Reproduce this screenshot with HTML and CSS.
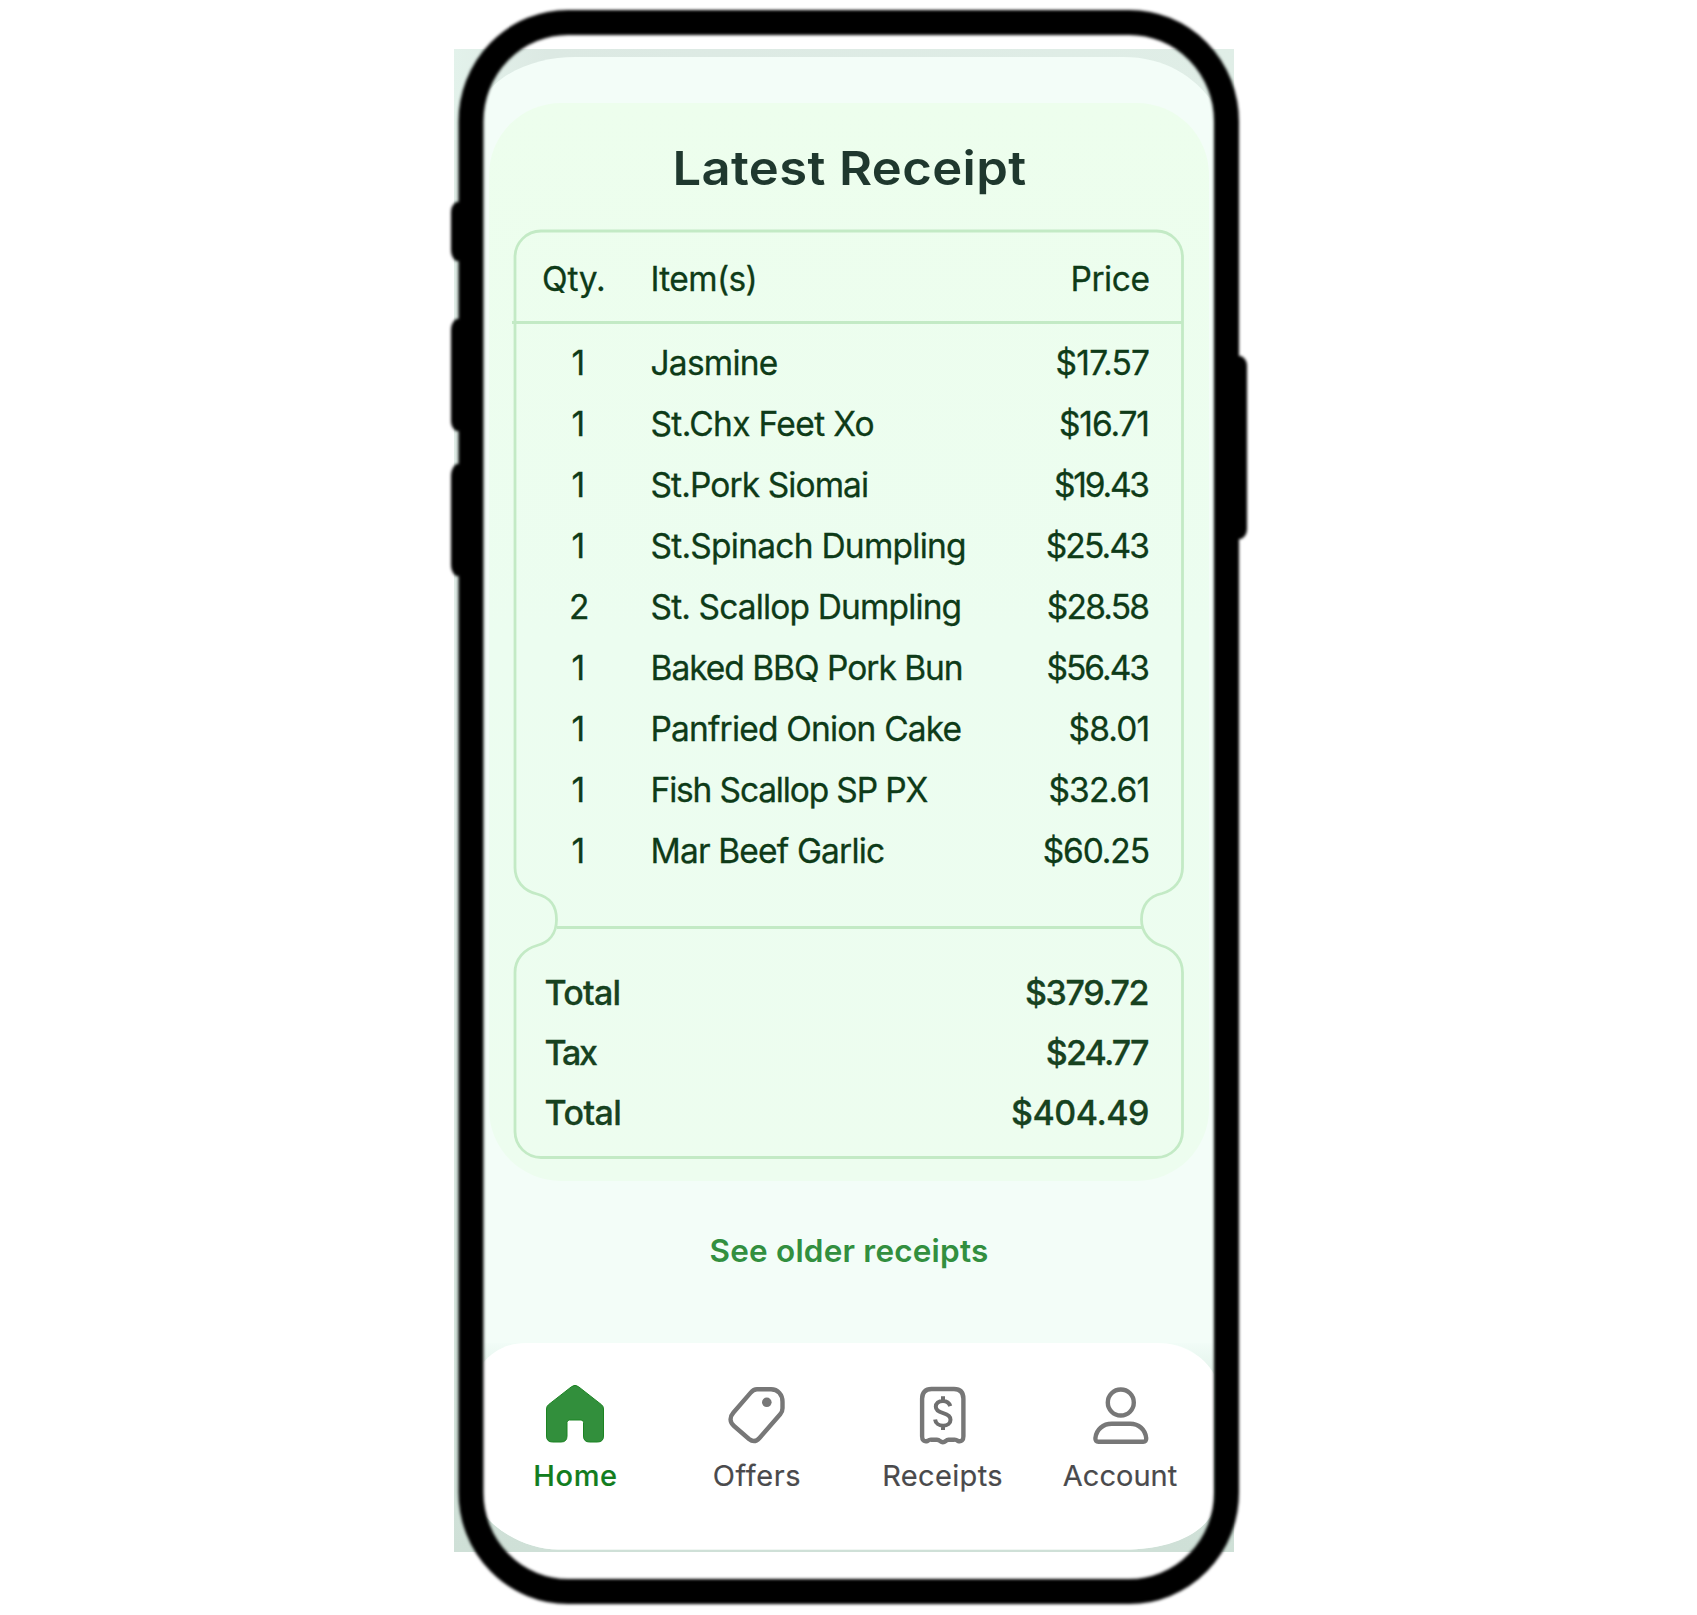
FILE: index.html
```html
<!DOCTYPE html>
<html lang="en">
<head>
<meta charset="utf-8">
<title>Latest Receipt</title>
<link rel="stylesheet" href="styles.css">
</head>
<body>
<div class="phone">
  <svg class="backdrop" viewBox="450 0 798 1615" aria-hidden="true">
    <defs>
      <linearGradient id="shade" x1="0" y1="0" x2="0" y2="1">
        <stop offset="0" stop-color="#dfede6"/><stop offset=".5" stop-color="#e2eee9"/><stop offset="1" stop-color="#cfe0d7"/>
      </linearGradient>
      <linearGradient id="strip" x1="0" y1="0" x2="1" y2="0">
        <stop offset="0" stop-color="#e3f2eb"/><stop offset=".12" stop-color="#dce9e3"/><stop offset="1" stop-color="#e0eee7"/>
      </linearGradient>
      <linearGradient id="corner" x1="0" y1="0" x2="0" y2="1">
        <stop offset="0" stop-color="#f1fcf7"/><stop offset="1" stop-color="#e2f2ea"/>
      </linearGradient>
    </defs>
    <path fill="url(#shade)" d="M454 49H1234V1552H454Z"/>
    <path fill="url(#strip)" d="M454 49H1234V140H454Z"/>
    <path fill="#f3fdf8" d="M482 100C500 70 540 57 575 57H1123C1165 57 1194 76 1214 104V1510C1202 1538 1160 1549.500 1125 1549.500H558C530 1549.500 500 1535 482 1512Z"/>
    <path fill="url(#corner)" d="M484 1343H1214V1376C1202 1354 1184 1343 1160 1343H524C508 1343 496 1351 484 1363Z"/>
    <path fill="#fff" d="M482 1364C494 1350 508 1343 526 1343H1158C1182 1343 1204 1356 1214 1374V1510C1200 1540 1160 1549.500 1125 1549.500H558C530 1549.500 500 1535 482 1512Z"/>
  </svg>

  <main class="panel">
    <h1 class="title">Latest Receipt</h1>
    <section class="ticket">
      <svg class="outline" viewBox="511 228.500 674 932" aria-hidden="true">
        <path d="M541 231.500H1156.500A26 26 0 0 1 1182.500 257.500V868C1182.500 881 1174 890.500 1162 894C1149 896.500 1141.500 906 1141.500 920C1141.500 933 1150 942.500 1161 946C1174 949.500 1182.500 960 1182.500 973V1132A26 26 0 0 1 1156.500 1158H541A26 26 0 0 1 515 1132V973C515 960 524 949.500 537 946C549 943 556.500 934 556.500 920C556.500 906 549 897.500 537 894.500C523 891 515 881 515 868V257.500A26 26 0 0 1 541 231.500Z"/>
        <path d="M512 323H1182M557 928H1142"/>
      </svg>
      <div class="row head"><span class="qty">Qty.</span><span class="item">Item(s)</span><span class="price">Price</span></div>
      <div class="rows">
        <div class="row r1"><span class="qty">1</span><span class="item">Jasmine</span><span class="price">$17.57</span></div>
        <div class="row r2"><span class="qty">1</span><span class="item">St.Chx Feet Xo</span><span class="price">$16.71</span></div>
        <div class="row r3"><span class="qty">1</span><span class="item">St.Pork Siomai</span><span class="price">$19.43</span></div>
        <div class="row r4"><span class="qty">1</span><span class="item">St.Spinach Dumpling</span><span class="price">$25.43</span></div>
        <div class="row r5"><span class="qty">2</span><span class="item">St. Scallop Dumpling</span><span class="price">$28.58</span></div>
        <div class="row r6"><span class="qty">1</span><span class="item">Baked BBQ Pork Bun</span><span class="price">$56.43</span></div>
        <div class="row r7"><span class="qty">1</span><span class="item">Panfried Onion Cake</span><span class="price">$8.01</span></div>
        <div class="row r8"><span class="qty">1</span><span class="item">Fish Scallop SP PX</span><span class="price">$32.61</span></div>
        <div class="row r9"><span class="qty">1</span><span class="item">Mar Beef Garlic</span><span class="price">$60.25</span></div>
      </div>
      <div class="totals">
        <div class="sum s1"><span class="label">Total</span><span class="price">$379.72</span></div>
        <div class="sum s2"><span class="label">Tax</span><span class="price">$24.77</span></div>
        <div class="sum s3"><span class="label">Total</span><span class="price">$404.49</span></div>
      </div>
    </section>
  </main>

  <a class="older">See older receipts</a>

  <nav class="tabs">
    <a class="tab home">
      <svg viewBox="1 0 60 60" aria-hidden="true"><path fill="#328f3c" stroke="#1b8322" d="M26.500 1.700Q30 -1 33.500 1.700L56.500 19.700Q58.500 21.300 58.500 24V51Q58.500 57 52.500 57H44.500Q38.500 57 38.500 51V37.500Q38.500 35 36 35H24.500Q22 35 22 37.500V51Q22 57 16 57H7.500Q1.500 57 1.500 51V24Q1.500 21.300 3.500 19.700Z"/></svg>
      <span>Home</span>
    </a>
    <a class="tab offers">
      <svg viewBox="0 0 60 60" aria-hidden="true"><path class="line" d="M30 4.300H44C51 4.300 55.500 9.700 55.500 16.700V23.200Q55.500 26.700 53.200 29.300L32.500 53Q27.500 58.500 22 54L7 41C2.500 37 2.500 32 6.500 27.500L23.500 7.900Q26.500 4.300 30 4.300Z"/><circle cx="39.800" cy="17.300" r="4.800" fill="#777"/></svg>
      <span>Offers</span>
    </a>
    <a class="tab receipts">
      <svg viewBox="0 0 60 60" aria-hidden="true"><path class="line" d="M14.500 56Q9.100 57.300 9.100 51.200V13.700Q9.100 4 18.500 4H41Q50.400 4 50.400 13.700V51.200Q50.400 57.300 45 56Q43 54.400 41 54.700H35.500Q34 54.700 32.700 56Q30 58.300 27 56Q25.600 54.700 24 54.700H18.500Q16.500 54.400 14.500 56Z"/><path class="dollar" d="M37.300 21.200C36.200 17.600 33.500 15.900 30 15.900C25.600 15.900 22.800 18.400 22.800 21.800C22.800 25.700 26 27 30.200 28.200C34.400 29.400 37.500 30.700 37.500 34.700C37.500 38.300 34.500 40.700 30.200 40.700C25.900 40.700 22.600 38.300 22.100 34.400M30 11.300V17M30 40V45"/></svg>
      <span>Receipts</span>
    </a>
    <a class="tab account">
      <svg viewBox="0 0 60 60" aria-hidden="true"><circle class="line" cx="30.800" cy="17.500" r="13"/><path class="line" d="M8.500 56.800Q5.200 56.800 5.400 53.100C6.200 44.600 13.200 38.800 21.700 38.800H40.200C48.700 38.800 55.400 44.600 56.200 53.100Q56.400 56.800 53.200 56.800Z"/></svg>
      <span>Account</span>
    </a>
  </nav>

  <svg class="frame" viewBox="440 0 820 1615" aria-hidden="true">
    <rect x="471" y="22.500" width="755.500" height="1569" rx="97" ry="99"/>
    <path d="M462 202H456Q451 206 451 212V250Q451 257 456 261H462ZM462 319H456Q451 323 451 330V421Q451 427 456 431H462ZM462 464H456Q451 469 451 476V565Q451 572 456 576H462ZM1236 356H1241Q1247 359 1247 366V529Q1247 536 1241 539H1236Z"/>
  </svg>
</div>
</body>
</html>
```
FILE: styles.css
```css
* { box-sizing: border-box; }

body {
  margin: 0;
  background: #fff;
  font-family: Inter, "Liberation Sans", sans-serif;
}

.phone {
  position: relative;
  width: 798px;
  height: 1615px;
  margin-left: 450px;
  padding: 103px 39px 0;
  display: flex;
  flex-direction: column;
  isolation: isolate;
}

.backdrop {
  position: absolute;
  inset: 0;
  width: 798px;
  height: 1615px;
  z-index: -1;
}

.frame {
  position: absolute;
  left: -10px;
  top: 0;
  width: 820px;
  height: 1615px;
  filter: blur(1.5px);
}

.frame rect {
  fill: none;
  stroke: #000;
  stroke-width: 25;
}

.panel {
  height: 1078px;
  padding: 35px 24.500px 0;
  border-radius: 72px;
  background: linear-gradient(#edfeed, #ecfdf0 50%, #edfdef);
}

.title {
  margin: 0 0 32px;
  font-size: 47px;
  font-weight: 600;
  line-height: 60px;
  letter-spacing: .35px;
  text-align: center;
  color: #1f382e;
  transform: scaleX(1.08);
}

.ticket {
  position: relative;
  height: 929px;
  padding: 19px 34.500px 0 28.500px;
  color: #0e3b18;
  -webkit-text-stroke: .3px;
}

.outline {
  position: absolute;
  left: -2.500px;
  top: -2px;
  width: 674px;
  height: 932px;
  fill: none;
  stroke: #c3eac5;
  stroke-width: 2.800;
}

.row {
  display: grid;
  grid-template-columns: 108.500px 1fr auto;
  font-size: 33.500px;
  line-height: 61px;
  white-space: nowrap;
}

.rows { margin-top: 22.800px; }

.rows .qty { padding-left: 29.500px; }

.rows .r5 .qty { padding-left: 27px; }

.item { letter-spacing: var(--item); }

.price {
  letter-spacing: var(--price);
  margin-right: calc(var(--price) * -1);
}

.head { --item: -.65px; --price: -.45px; letter-spacing: -.2px; }
.r1 { --item: -.75px; --price: -.8px; }
.r2 { --item: -.65px; --price: -1.1px; }
.r3 { --item: -.9px; --price: -2.2px; }
.r4 { --item: -.75px; --price: -1.8px; }
.r5 { --item: -.86px; --price: -1.8px; }
.r6 { --item: -1.02px; --price: -2px; }
.r7 { --item: -.82px; --price: -.9px; }
.r8 { --item: -1.15px; --price: -.85px; }
.r9 { --item: -.83px; --price: -1.15px; }

.totals { margin-top: 81.200px; }

.sum {
  display: flex;
  justify-content: space-between;
  padding: 0 .5px 0 2.500px;
  font-size: 34px;
  font-weight: 550;
  line-height: 60px;
  color: #17421f;
}

.s1 { --label: -.8px; --price: -1.4px; }
.s2 { --label: -2.3px; --price: -1.8px; }
.s3 { --label: -.6px; --price: -.5px; }

.label { letter-spacing: var(--label); }

.older {
  margin-top: 50px;
  font-size: 31.500px;
  font-weight: 600;
  line-height: 40px;
  letter-spacing: .2px;
  text-align: center;
  color: #328f3f;
}

.tabs {
  display: grid;
  grid-template-columns: 181px 182px 189px 166px;
  margin: 72px 0 0 -4px;
  padding-top: 41.500px;
  height: 207px;
}

.tab {
  display: flex;
  flex-direction: column;
  align-items: center;
  font-size: 29px;
  line-height: 36px;
  color: #4a4a4c;
  -webkit-text-stroke: .2px;
}

.tab svg {
  width: 60px;
  height: 60px;
  margin-bottom: 13px;
}

.line {
  fill: none;
  stroke: #777;
  stroke-width: 4.400;
  stroke-linejoin: round;
}

.dollar {
  fill: none;
  stroke: #6f6f6f;
  stroke-width: 4;
}

.home { color: #127d1e; font-weight: 500; letter-spacing: .7px; }
.offers { letter-spacing: .6px; }
.receipts { letter-spacing: .35px; }
```
